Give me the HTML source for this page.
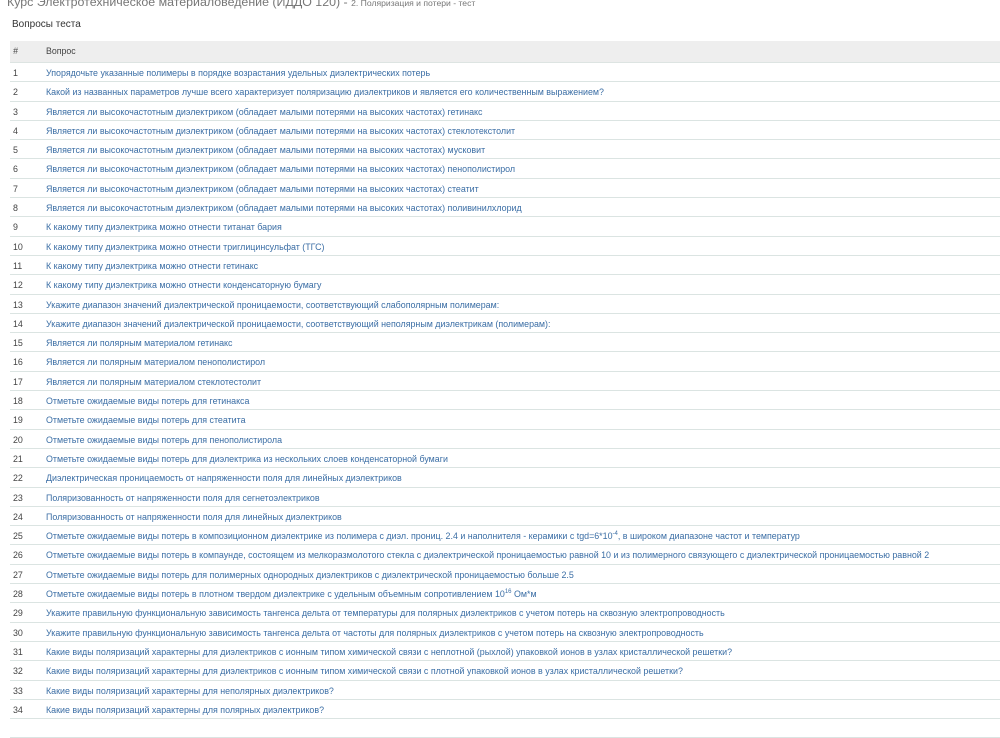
<!DOCTYPE html>
<html><head><meta charset="utf-8"><style>
body{margin:0;background:#fff;font-family:"Liberation Sans",sans-serif;width:1000px;height:734px;overflow:hidden;position:relative}
.t{position:absolute;left:7px;top:-5px;font-size:12.4px;color:#777;white-space:nowrap}
.t small{font-size:8.6px}
.h{position:absolute;left:12px;top:19px;font-size:10px;color:#333}
.tb{position:absolute;left:10px;top:41px;width:990px}
.hd{height:21px;background:#eee;font-size:8.8px;color:#444;position:relative;border-bottom:1px solid #dde4e2}
.r{height:18.3px;border-bottom:1px solid #dbe4e2;position:relative;font-size:8.9px;white-space:nowrap}
.n{position:absolute;left:3px;top:5px;color:#444}
.q{position:absolute;left:36px;top:5px;color:#3b6ea5}
.hd .n{top:5px;font-style:italic}.hd .q{top:5px;color:#444}
sup{font-size:6px;line-height:0}
</style></head><body>
<div class="t">Курс Электротехническое материаловедение (ИДДО 120) - <small>2. Поляризация и потери - тест</small></div>
<div class="h">Вопросы теста</div>
<div class="tb">
<div class="hd"><span class="n">#</span><span class="q">Вопрос</span></div>
<div class="r"><span class="n">1</span><span class="q">Упорядочьте указанные полимеры в порядке возрастания удельных диэлектрических потерь</span></div>
<div class="r"><span class="n">2</span><span class="q">Какой из названных параметров лучше всего характеризует поляризацию диэлектриков и является его количественным выражением?</span></div>
<div class="r"><span class="n">3</span><span class="q">Является ли высокочастотным диэлектриком (обладает малыми потерями на высоких частотах) гетинакс</span></div>
<div class="r"><span class="n">4</span><span class="q">Является ли высокочастотным диэлектриком (обладает малыми потерями на высоких частотах) стеклотекстолит</span></div>
<div class="r"><span class="n">5</span><span class="q">Является ли высокочастотным диэлектриком (обладает малыми потерями на высоких частотах) мусковит</span></div>
<div class="r"><span class="n">6</span><span class="q">Является ли высокочастотным диэлектриком (обладает малыми потерями на высоких частотах) пенополистирол</span></div>
<div class="r"><span class="n">7</span><span class="q">Является ли высокочастотным диэлектриком (обладает малыми потерями на высоких частотах) стеатит</span></div>
<div class="r"><span class="n">8</span><span class="q">Является ли высокочастотным диэлектриком (обладает малыми потерями на высоких частотах) поливинилхлорид</span></div>
<div class="r"><span class="n">9</span><span class="q">К какому типу диэлектрика можно отнести титанат бария</span></div>
<div class="r"><span class="n">10</span><span class="q">К какому типу диэлектрика можно отнести триглицинсульфат (ТГС)</span></div>
<div class="r"><span class="n">11</span><span class="q">К какому типу диэлектрика можно отнести гетинакс</span></div>
<div class="r"><span class="n">12</span><span class="q">К какому типу диэлектрика можно отнести конденсаторную бумагу</span></div>
<div class="r"><span class="n">13</span><span class="q">Укажите диапазон значений диэлектрической проницаемости, соответствующий слабополярным полимерам:</span></div>
<div class="r"><span class="n">14</span><span class="q">Укажите диапазон значений диэлектрической проницаемости, соответствующий неполярным диэлектрикам (полимерам):</span></div>
<div class="r"><span class="n">15</span><span class="q">Является ли полярным материалом гетинакс</span></div>
<div class="r"><span class="n">16</span><span class="q">Является ли полярным материалом пенополистирол</span></div>
<div class="r"><span class="n">17</span><span class="q">Является ли полярным материалом стеклотестолит</span></div>
<div class="r"><span class="n">18</span><span class="q">Отметьте ожидаемые виды потерь для гетинакса</span></div>
<div class="r"><span class="n">19</span><span class="q">Отметьте ожидаемые виды потерь для стеатита</span></div>
<div class="r"><span class="n">20</span><span class="q">Отметьте ожидаемые виды потерь для пенополистирола</span></div>
<div class="r"><span class="n">21</span><span class="q">Отметьте ожидаемые виды потерь для диэлектрика из нескольких слоев конденсаторной бумаги</span></div>
<div class="r"><span class="n">22</span><span class="q">Диэлектрическая проницаемость от напряженности поля для линейных диэлектриков</span></div>
<div class="r"><span class="n">23</span><span class="q">Поляризованность от напряженности поля для сегнетоэлектриков</span></div>
<div class="r"><span class="n">24</span><span class="q">Поляризованность от напряженности поля для линейных диэлектриков</span></div>
<div class="r"><span class="n">25</span><span class="q">Отметьте ожидаемые виды потерь в композиционном диэлектрике из полимера с диэл. прониц. 2.4 и наполнителя - керамики с tgd=6*10<sup>-4</sup>, в широком диапазоне частот и температур</span></div>
<div class="r"><span class="n">26</span><span class="q">Отметьте ожидаемые виды потерь в компаунде, состоящем из мелкоразмолотого стекла с диэлектрической проницаемостью равной 10 и из полимерного связующего с диэлектрической проницаемостью равной 2</span></div>
<div class="r"><span class="n">27</span><span class="q">Отметьте ожидаемые виды потерь для полимерных однородных диэлектриков с диэлектрической проницаемостью больше 2.5</span></div>
<div class="r"><span class="n">28</span><span class="q">Отметьте ожидаемые виды потерь в плотном твердом диэлектрике с удельным объемным сопротивлением 10<sup>16</sup> Ом*м</span></div>
<div class="r"><span class="n">29</span><span class="q">Укажите правильную функциональную зависимость тангенса дельта от температуры для полярных диэлектриков с учетом потерь на сквозную электропроводность</span></div>
<div class="r"><span class="n">30</span><span class="q">Укажите правильную функциональную зависимость тангенса дельта от частоты для полярных диэлектриков с учетом потерь на сквозную электропроводность</span></div>
<div class="r"><span class="n">31</span><span class="q">Какие виды поляризаций характерны для диэлектриков с ионным типом химической связи с неплотной (рыхлой) упаковкой ионов в узлах кристаллической решетки?</span></div>
<div class="r"><span class="n">32</span><span class="q">Какие виды поляризаций характерны для диэлектриков с ионным типом химической связи с плотной упаковкой ионов в узлах кристаллической решетки?</span></div>
<div class="r"><span class="n">33</span><span class="q">Какие виды поляризаций характерны для неполярных диэлектриков?</span></div>
<div class="r"><span class="n">34</span><span class="q">Какие виды поляризаций характерны для полярных диэлектриков?</span></div>
<div class="r"></div>
</div>
</body></html>
